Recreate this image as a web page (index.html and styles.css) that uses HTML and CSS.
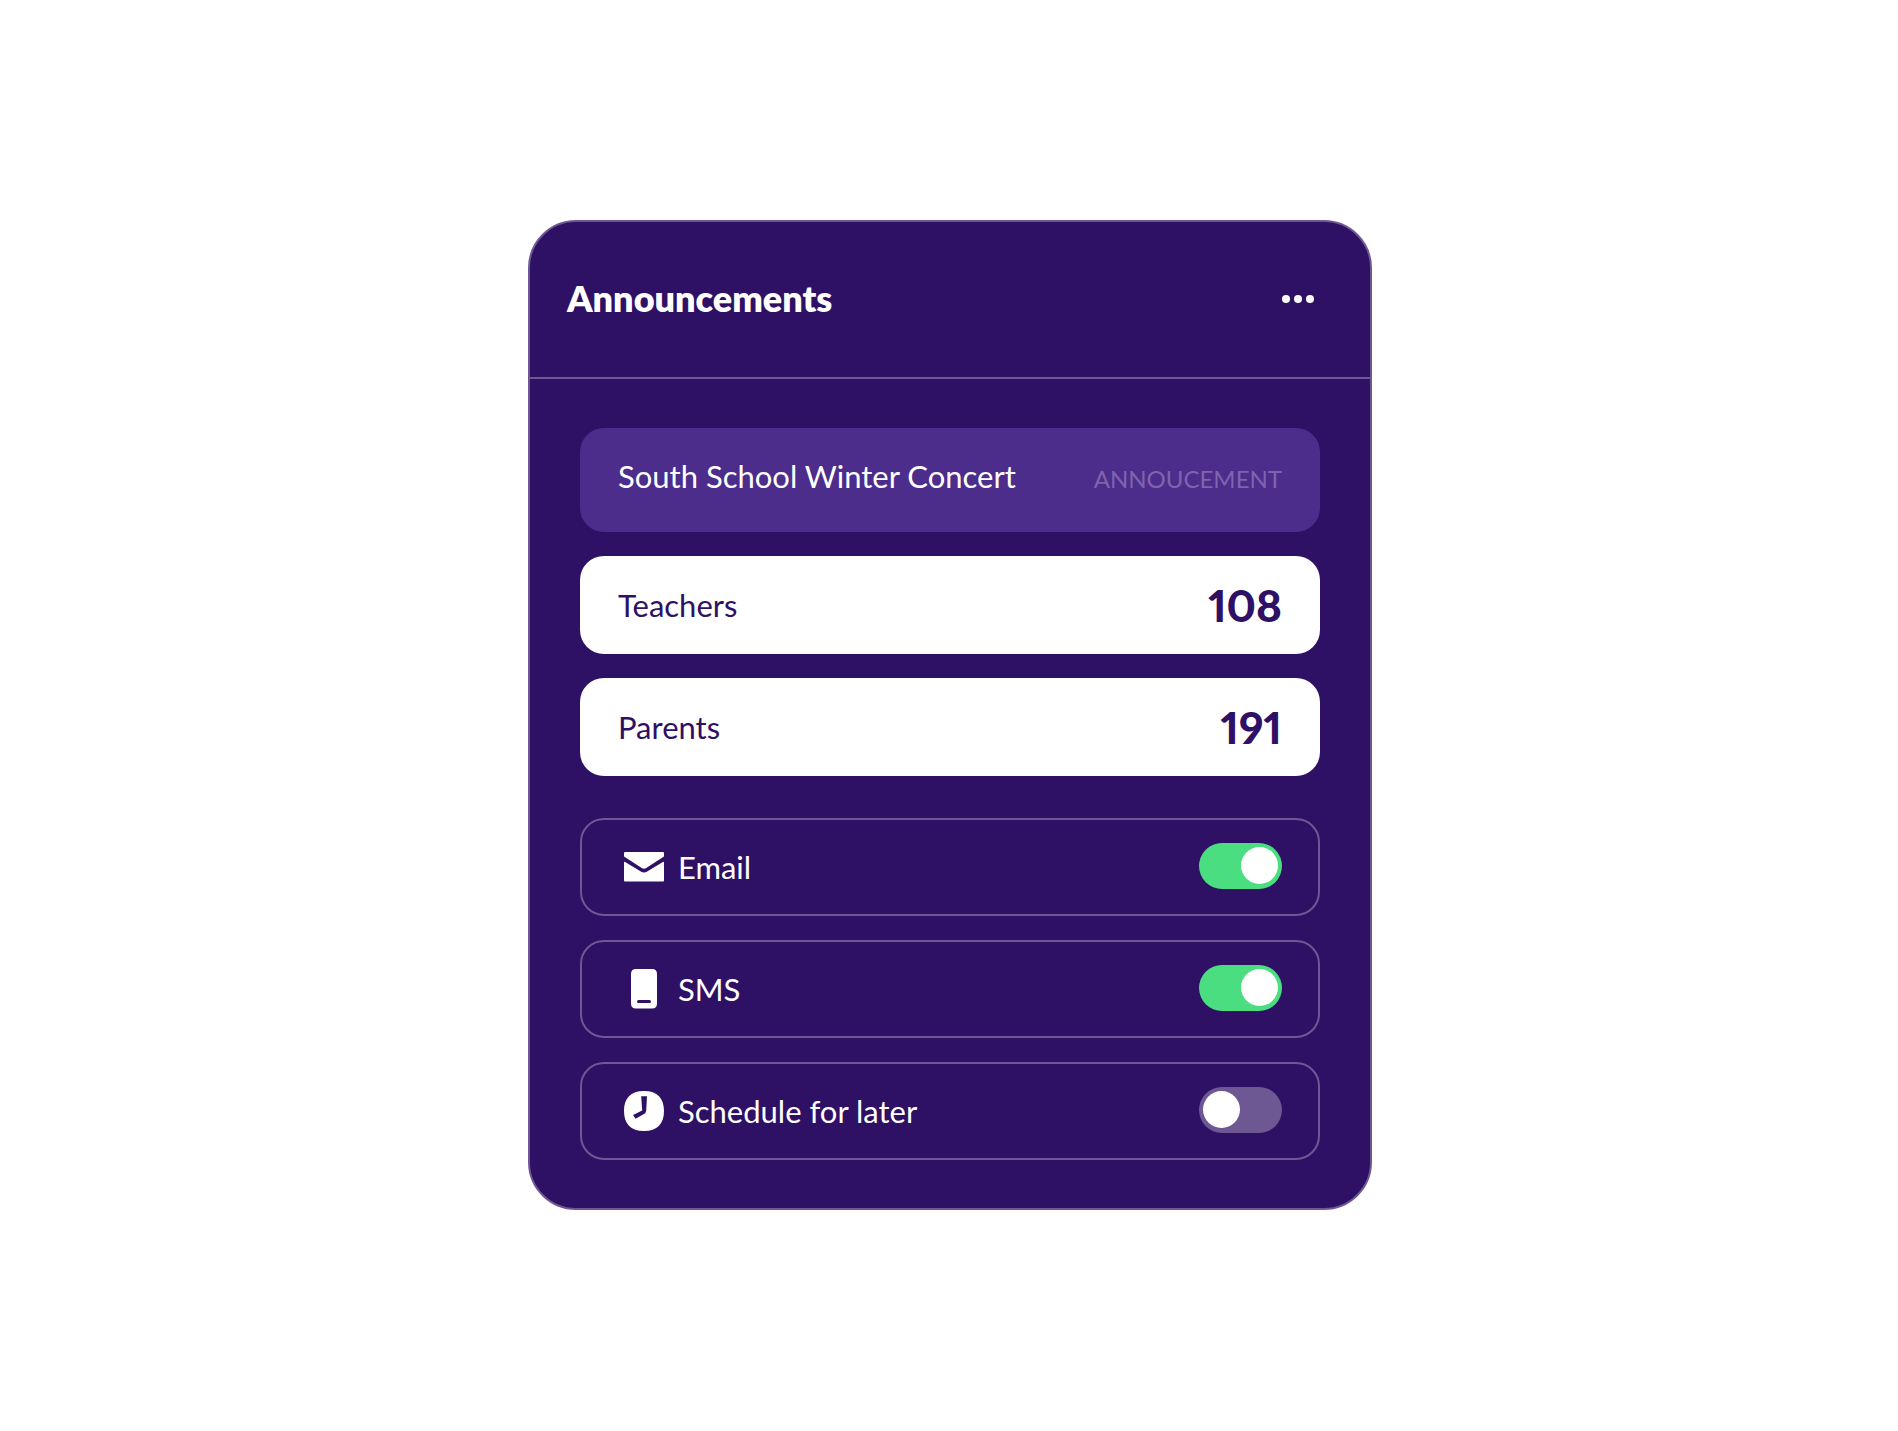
FILE: index.html
```html
<!DOCTYPE html>
<html lang="en">
<head>
<meta charset="utf-8">
<meta name="viewport" content="width=device-width, initial-scale=1">
<title>Announcements</title>
<link rel="stylesheet" href="styles.css">
</head>
<body>
<main class="card">
  <header class="card-header">
    <h1 class="card-title">Announcements</h1>
    <button class="menu-button" type="button" aria-label="More options">
      <svg width="32" height="8" viewBox="0 0 32 8" fill="currentColor" aria-hidden="true"><circle cx="4" cy="4" r="4"/><circle cx="16" cy="4" r="4"/><circle cx="28" cy="4" r="4"/></svg>
    </button>
  </header>
  <div class="card-body">
    <section class="group">
      <div class="row row-topic">
        <span class="label">South School Winter Concert</span>
        <span class="tag">ANNOUCEMENT</span>
      </div>
      <div class="row row-count">
        <span class="label">Teachers</span>
        <strong class="count">108</strong>
      </div>
      <div class="row row-count">
        <span class="label">Parents</span>
        <strong class="count">191</strong>
      </div>
    </section>
    <section class="group">
      <label class="row row-option">
        <svg class="icon" viewBox="0 0 40 40" fill="currentColor" aria-hidden="true"><path d="M1 5H39Q40 5 40 6V9.500L22.600 20.800Q20 22.500 17.400 20.800L0 9.500V6Q0 5 1 5Z"/><path d="M0 15.500Q0 14.500 1.200 14.900L16.800 24.600Q20 26.400 23.200 24.600L38.800 14.900Q40 14.500 40 15.500V33.500Q40 34.500 39 34.500H1Q0 34.500 0 33.500Z"/></svg>
        <span class="label">Email</span>
        <input class="toggle" type="checkbox" role="switch" checked>
      </label>
      <label class="row row-option">
        <svg class="icon" viewBox="0 0 40 40" fill="currentColor" aria-hidden="true"><path fill-rule="evenodd" d="M12 0H28Q33 0 33 5V34.500Q33 39.500 28 39.500H12Q7 39.500 7 34.500V5Q7 0 12 0ZM14.500 31Q13 31 13 32.500T14.500 34H25.500Q27 34 27 32.500T25.500 31Z"/></svg>
        <span class="label">SMS</span>
        <input class="toggle" type="checkbox" role="switch" checked>
      </label>
      <label class="row row-option">
        <svg class="icon" viewBox="0 0 40 40" fill="currentColor" aria-hidden="true"><path fill-rule="evenodd" d="M20 0C33.500 0 40 7.500 40 20S33.500 40 20 40S0 32.500 0 20S6.500 0 20 0ZM17.200 5.300L18.200 19.500L9 24L11.600 27.700L21.200 22.300L22.200 19.700L23 5.300Z"/></svg>
        <span class="label">Schedule for later</span>
        <input class="toggle" type="checkbox" role="switch">
      </label>
    </section>
  </div>
</main>
</body>
</html>
```
FILE: styles.css
```css
:root {
  --ink: #2e1065;
  --line: #6e5893;
  --topic: #4c2d8c;
  --on: #4ade80;
}

* {
  box-sizing: border-box;
}

body {
  display: flex;
  align-items: center;
  justify-content: center;
  min-height: 100vh;
  margin: 0;
  padding: 24px 24px 26px 26px;
  background: #fff;
  color: #fff;
  font-family: Lato, "Open Sans", sans-serif;
}

.card {
  width: 100%;
  max-width: 844px;
  border: 2px solid var(--line);
  border-radius: 48px;
  background: var(--ink);
}

.card-header {
  display: flex;
  align-items: center;
  justify-content: space-between;
  min-height: 157px;
  padding: 0 48px 0 37px;
  border-bottom: 2px solid var(--line);
}

.card-title {
  margin: 0;
  padding-bottom: 2px;
  font-size: 36px;
  line-height: 48px;
  font-weight: 800;
}

.menu-button {
  display: flex;
  padding: 8px;
  border: 0;
  background: none;
  color: inherit;
  cursor: pointer;
}

.card-body {
  display: flex;
  flex-direction: column;
  gap: 42px;
  padding: 49px 50px 48px;
}

.group {
  display: flex;
  flex-direction: column;
  gap: 24px;
}

.row {
  display: flex;
  align-items: center;
  min-height: 98px;
  padding: 0 38px;
  border-radius: 24px;
}

.row-topic {
  align-items: baseline;
  min-height: 104px;
  padding: 28px 38px;
  background: var(--topic);
}

.row-count {
  background: #fff;
  color: var(--ink);
}

.row-option {
  gap: 14px;
  padding: 0 36px 0 42px;
  border: 2px solid var(--line);
  cursor: pointer;
}

.label {
  flex: 1;
  font-size: 31px;
  line-height: 40px;
}

.tag {
  color: #7f64ad;
  font-size: 24px;
  line-height: 40px;
}

.count {
  font-size: 44px;
  line-height: 56px;
  font-weight: 900;
  font-variant-numeric: proportional-nums;
}

.icon {
  flex: none;
  width: 40px;
  height: 40px;
}

.toggle {
  display: flex;
  flex: none;
  align-items: center;
  width: 83px;
  height: 46px;
  margin: 0 0 2px;
  padding: 0 4px;
  border-radius: 23px;
  background: var(--line);
  appearance: none;
  cursor: pointer;
}

.toggle::before {
  width: 37px;
  height: 37px;
  border-radius: 50%;
  background: #fff;
  content: "";
}

.toggle:checked {
  justify-content: flex-end;
  background: var(--on);
}
```
